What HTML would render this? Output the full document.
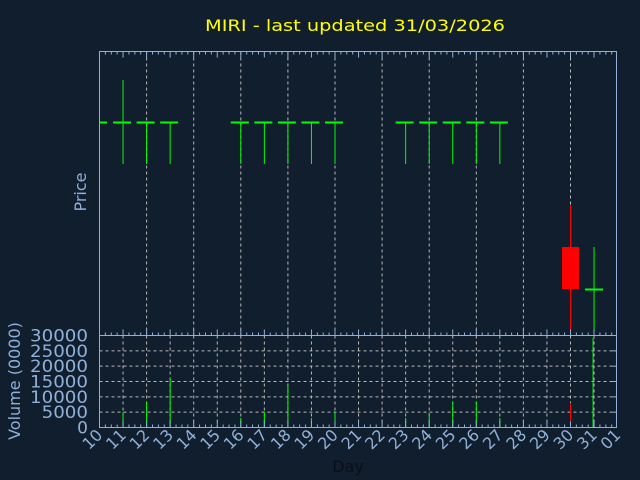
<!DOCTYPE html>
<html><head><meta charset="utf-8"><style>
html,body{margin:0;padding:0;background:#111e2e;}
svg{display:block;}
text{font-family:"DejaVu Sans","Liberation Sans",sans-serif;}
</style></head><body>
<svg id="s" width="640" height="480" viewBox="0 0 640 480" xmlns="http://www.w3.org/2000/svg">
<rect width="640" height="480" fill="#111e2e"/>
<text x="355" y="31" fill="#ffff00" font-size="16" text-anchor="middle" textLength="300" lengthAdjust="spacingAndGlyphs" style="font-family:'DejaVu Sans Condensed','DejaVu Sans',sans-serif">MIRI - last updated 31/03/2026</text>
<text x="86" y="192" fill="#8fb0d8" font-size="16" text-anchor="middle" transform="rotate(-90 86 192)">Price</text>
<text x="20" y="381" fill="#8fb0d8" font-size="16" text-anchor="middle" transform="rotate(-90 20 381)">Volume (0000)</text>
<text x="348" y="472" font-size="16" text-anchor="middle" style="fill:#0a0f17">Day</text>
<g id="g"></g>
</svg>
<script>
var g=document.getElementById('g'),h='';
var L=99.5,R=616.5,T=51.5,PB=335.5,VB=427.5,d=23.55;
function X(i){return L+i*d;}
var ax='#8fb0d8',gr='#b8b8b8';
for(var i=2;i<22;i+=2)h+='<line x1="'+X(i)+'" y1="'+T+'" x2="'+X(i)+'" y2="'+PB+'" stroke="'+gr+'" stroke-dasharray="3,3"/>';
for(var i=1;i<22;i++)h+='<line x1="'+X(i)+'" y1="'+PB+'" x2="'+X(i)+'" y2="'+VB+'" stroke="'+gr+'" stroke-dasharray="3,3"/>';
for(var k=1;k<6;k++){var y=VB-k*15.33;h+='<line x1="'+L+'" y1="'+y+'" x2="'+R+'" y2="'+y+'" stroke="'+gr+'" stroke-dasharray="3,3"/>';}
var days=[1,2,3,6,7,8,9,10,13,14,15,16,17];
h+='<line x1="99" y1="122.5" x2="107" y2="122.5" stroke="#00ff00" stroke-width="2"/>';
days.forEach(function(i){var x=X(i);h+='<line x1="'+(x-10)+'" y1="122.5" x2="'+(x+8)+'" y2="122.5" stroke="#00ff00" stroke-width="2"/>';
h+='<line x1="'+x+'" y1="'+(i==1?80:122)+'" x2="'+x+'" y2="164" stroke="#00ff00"/>';});
var x30=X(20);h+='<line x1="'+x30+'" y1="205" x2="'+x30+'" y2="333" stroke="#ff0000"/><rect x="'+(x30-8.5)+'" y="247" width="17" height="42" fill="#ff0000"/>';
var x31=X(21);h+='<line x1="'+x31+'" y1="247" x2="'+x31+'" y2="331" stroke="#00ff00"/><line x1="'+(x31-9)+'" y1="289.5" x2="'+(x31+9)+'" y2="289.5" stroke="#00ff00" stroke-width="2"/>';
var vb=[[1,412],[2,402],[3,378],[6,418],[7,412],[8,386],[9,418],[10,412],[13,418],[14,413],[15,402],[16,402],[17,418]];
vb.forEach(function(v){h+='<line x1="'+X(v[0])+'" y1="'+v[1]+'" x2="'+X(v[0])+'" y2="'+VB+'" stroke="#00ff00"/>';});
h+='<line x1="'+x30+'" y1="403" x2="'+x30+'" y2="'+VB+'" stroke="#ff0000"/>';
h+='<line x1="'+(x31-1)+'" y1="338" x2="'+(x31-1)+'" y2="'+VB+'" stroke="#00ff00"/>';
h+='<rect x="'+L+'" y="'+T+'" width="'+(R-L)+'" height="'+(VB-T)+'" fill="none" stroke="'+ax+'"/>';
h+='<line x1="'+L+'" y1="'+PB+'" x2="'+R+'" y2="'+PB+'" stroke="'+ax+'"/>';
for(var i=0;i<=22;i++){for(var m=0;m<4;m++){var x=X(i)+m*d/4;if(x>R)break;var len=m==0?6:3;
h+='<line x1="'+x+'" y1="'+T+'" x2="'+x+'" y2="'+(T+len)+'" stroke="'+ax+'"/>';
h+='<line x1="'+x+'" y1="'+PB+'" x2="'+x+'" y2="'+(PB-len)+'" stroke="'+ax+'"/>';
h+='<line x1="'+x+'" y1="'+VB+'" x2="'+x+'" y2="'+(VB-len)+'" stroke="'+ax+'"/>';}}
for(var k=0;k<=6;k++){var y=VB-k*15.33;h+='<line x1="'+(R-4)+'" y1="'+y+'" x2="'+R+'" y2="'+y+'" stroke="'+ax+'"/>';
var t=String(k*5000);h+='<text x="88" y="'+(y+6)+'" fill="'+ax+'" font-size="17" text-anchor="end"'+(t.length>1?' textLength="'+(t.length*11.6)+'" lengthAdjust="spacingAndGlyphs"':'')+'>'+t+'</text>';}
var lab=['10','11','12','13','14','15','16','17','18','19','20','21','22','23','24','25','26','27','28','29','30','31','01'];
lab.forEach(function(t,i){var x=X(i)+4,y=436;h+='<text x="'+x+'" y="'+y+'" fill="'+ax+'" font-size="16" text-anchor="end" transform="rotate(-45 '+x+' '+y+')">'+t+'</text>';});
g.innerHTML=h;
</script>
</body></html>
